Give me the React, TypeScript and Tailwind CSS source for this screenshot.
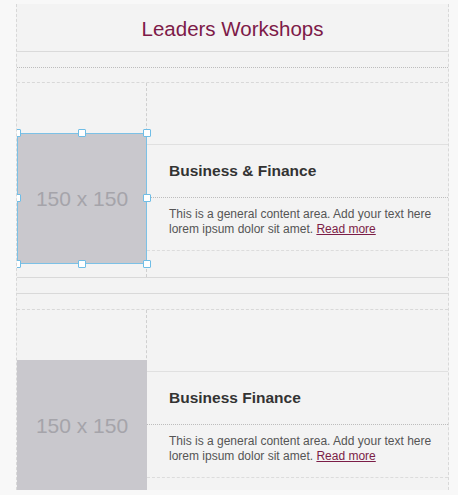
import React from 'react';

const font = { fontFamily: '"Liberation Sans", Arial, sans-serif' };

function Handle({ pos }: { pos: string }) {
  return (
    <span
      className={`absolute w-[8px] h-[8px] bg-white border border-[#6fbde6] rounded-[1px] ${pos}`}
    />
  );
}

function Placeholder({ selected }: { selected?: boolean }) {
  return (
    <div
      className={`relative w-[130px] h-[131px] bg-[#c9c8cd] flex items-center justify-center ${
        selected ? 'border border-[#7cc1e6]' : ''
      }`}
    >
      <span className="text-[21px] text-[#a5a4aa]">150 x 150</span>
      {selected && (
        <>
          <Handle pos="-left-[5px] -top-[5px]" />
          <Handle pos="left-[60px] -top-[5px]" />
          <Handle pos="-right-[5px] -top-[5px]" />
          <Handle pos="-left-[5px] top-[60px]" />
          <Handle pos="-right-[5px] top-[60px]" />
          <Handle pos="-left-[5px] -bottom-[5px]" />
          <Handle pos="left-[60px] -bottom-[5px]" />
          <Handle pos="-right-[5px] -bottom-[5px]" />
        </>
      )}
    </div>
  );
}

function Row({ title, selected }: { title: string; selected?: boolean }) {
  return (
    <div className="flex h-[195px] border-b border-[#d9d9d9]">
      <div className="w-[130px] shrink-0 border-r border-dashed border-[#cfcfcf] pt-[50px] relative z-10">
        <Placeholder selected={selected} />
      </div>
      <div className="flex-1 flex flex-col">
        <div className="h-[62px] border-b border-[#e0e0e0]" />
        <div className="h-[53px] border-b border-dotted border-[#bdbdbd] flex items-center pl-[22px]">
          <h3 className="text-[15.5px] font-bold text-[#333]">{title}</h3>
        </div>
        <div className="h-[53px] border-b border-dashed border-[#dcdcdc] pl-[22px] pt-[9px] text-[12px] leading-[15px] text-[#555]">
          This is a general content area. Add your text here
          <br />
          lorem ipsum dolor sit amet.{' '}
          <a className="text-[#7b1d47] underline">Read more</a>
        </div>
      </div>
    </div>
  );
}

export default function App() {
  return (
    <div
      className="w-[458px] h-[495px] overflow-hidden bg-[#f8f8f8] pt-[4px] pl-[16px]"
      style={font}
    >
      <div className="w-[433px] h-[486px] overflow-hidden bg-[#f3f3f3] border-l border-r border-dashed border-[#d8d8d8]">
        <div className="h-[48px] border-b border-[#dadada] flex items-center justify-center pt-[4px]">
          <h1 className="text-[20.5px] text-[#7d1a48]">Leaders Workshops</h1>
        </div>
        <div className="h-[16px] border-b border-dotted border-[#bdbdbd]" />
        <div className="h-[15px] border-b border-dashed border-[#d8d8d8]" />
        <Row title="Business & Finance" selected />
        <div className="h-[16px] border-b border-[#d9d9d9]" />
        <div className="h-[16px] border-b border-dashed border-[#d8d8d8]" />
        <Row title="Business Finance" />
      </div>
    </div>
  );
}
